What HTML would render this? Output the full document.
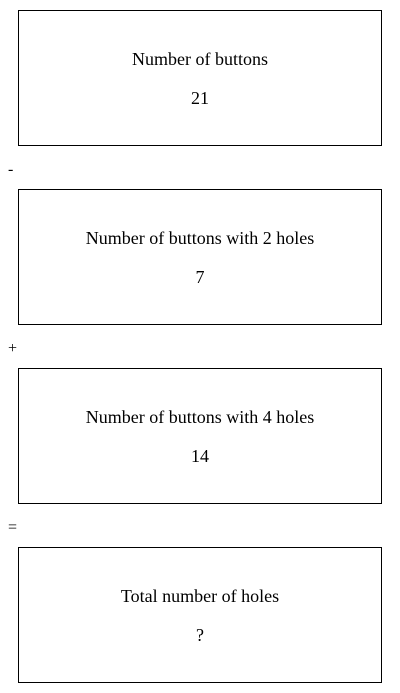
<!DOCTYPE html>
<html><head><style>
body{margin:0;background:#fff;width:400px;height:693px;position:relative;font-family:"Liberation Serif",serif;color:#000;}
.b{position:absolute;left:18px;width:362px;height:134px;border:1px solid #000;text-align:center;font-size:18px;}
.t{position:absolute;left:0;right:0;top:38px;}
.n{position:absolute;left:0;right:0;top:77px;}
.o{position:absolute;left:8px;font-size:16px;}
</style></head><body>
<div class="b" style="top:10px"><div class="t">Number of buttons</div><div class="n">21</div></div>
<div class="o" style="top:161px">-</div>
<div class="b" style="top:189px"><div class="t">Number of buttons with 2 holes</div><div class="n">7</div></div>
<div class="o" style="top:340px">+</div>
<div class="b" style="top:368px"><div class="t">Number of buttons with 4 holes</div><div class="n">14</div></div>
<div class="o" style="top:519px">=</div>
<div class="b" style="top:547px"><div class="t">Total number of holes</div><div class="n">?</div></div>
</body></html>
